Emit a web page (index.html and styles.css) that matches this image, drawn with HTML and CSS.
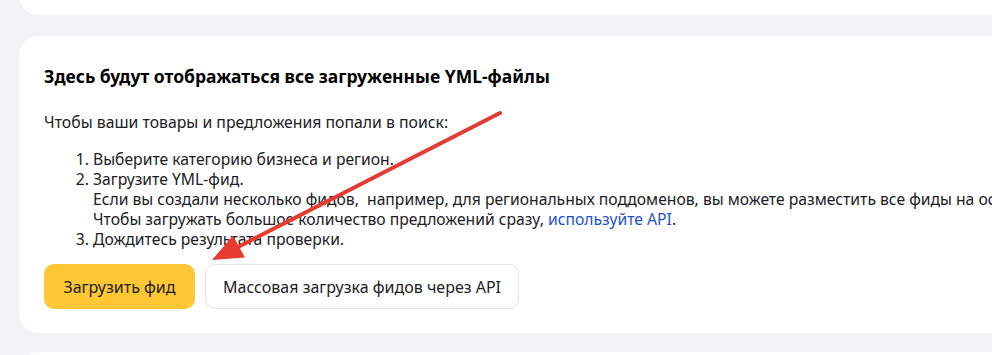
FILE: index.html
```html
<!DOCTYPE html>
<html lang="ru">
<head>
    <meta charset="UTF-8"/>
    <title>YML-файлы</title>
    <link rel="stylesheet" href="styles.css">
</head>
<body>
<div class="page">
    <div class="card card-top"></div>

    <div class="card card-feeds">
        <h2 class="feeds-title">Здесь будут отображаться все загруженные YML-файлы</h2>
        <p class="feeds-intro">Чтобы ваши товары и предложения попали в поиск:</p>
        <ol class="feeds-steps">
            <li>Выберите категорию бизнеса и регион.</li>
            <li>Загрузите YML-фид.<br/>
                Если вы создали несколько фидов,&nbsp; например, для региональных поддоменов, вы можете разместить все фиды на основном сайте.<br/>
                Чтобы загружать большое количество предложений сразу, <a href="" class="link">используйте API</a>.
            </li>
            <li>Дождитесь результата проверки.</li>
        </ol>
        <div class="feeds-actions">
            <button class="btn btn-yellow">Загрузить фид</button>
            <button class="btn btn-white">Массовая загрузка фидов через API</button>
        </div>
    </div>

    <div class="card card-bottom"></div>

    <!-- стрелка поверх скриншота -->
    <svg class="arrow" width="992" height="355" viewBox="0 0 992 355">
        <line x1="500" y1="113" x2="236" y2="248" stroke="#e53b31" stroke-width="4" stroke-linecap="round"/>
        <polygon points="212,260 233,235.5 245,257.5" fill="#e53b31"/>
    </svg>
</div>
</body>
</html>
```

FILE: styles.css
```css
html, body {margin: 0; padding: 0;}
body {background: #f2f3f5; font-family: "Noto Sans", "Liberation Sans", sans-serif; color: #21201f; overflow: hidden;}

.page {position: relative; width: 992px; height: 355px; overflow: hidden; padding-left: 19px; box-sizing: border-box;}

.card {background: #fff; border-radius: 20px; width: 1000px;}
.card-top {height: 40px; margin-top: -25px;}
.card-feeds {margin-top: 21px; height: 297px; box-sizing: border-box; padding: 28px 25px 0;}
.card-bottom {margin-top: 19px; height: 40px;}

.feeds-title {margin: 0; font-size: 17.5px; line-height: 24px; font-weight: bold; color: #000;}
.feeds-intro {margin: 24px 0 0; font-size: 15.8px; line-height: 20px;}
.feeds-steps {margin: 17px 0 0; padding-left: 49px; font-size: 15.7px; line-height: 20px; white-space: nowrap;}
.link {color: #1f50d4; text-decoration: none;}

.feeds-actions {display: flex; gap: 10px; margin-top: 15px;}
.btn {height: 45px; border-radius: 10px; font-family: inherit; font-size: 16px; color: #21201f; cursor: pointer; padding: 0 16px;}
.btn-yellow {width: 151px; background: #fec733; border: none;}
.btn-white {width: 314px; background: #fff; border: 1px solid #e4e4e6;}

.arrow {position: absolute; left: 0; top: 0; pointer-events: none;}
```
